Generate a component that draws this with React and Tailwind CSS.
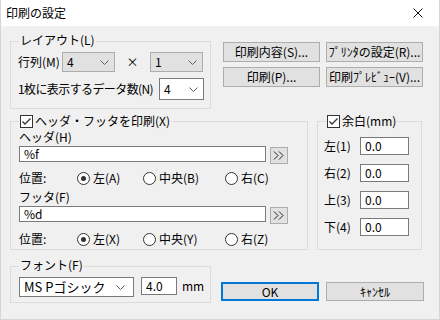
import React from 'react'

const Chevron = () => (
  <svg width="9" height="5" viewBox="0 0 9 5" className="shrink-0">
    <polyline points="0.5,0.5 4.5,4.5 8.5,0.5" fill="none" stroke="#606060" strokeWidth="1" />
  </svg>
)

const Check = () => (
  <span className="w-[13px] h-[13px] border border-[#333] bg-white flex items-center justify-center shrink-0">
    <svg width="11" height="11" viewBox="0 0 11 11">
      <polyline points="1.5,5.5 4,8 9.5,2.5" fill="none" stroke="#333" strokeWidth="1.3" />
    </svg>
  </span>
)

const Radio = ({ on, label, w }) => (
  <div className={`flex items-center gap-[3px] ${w}`}>
    <span className="w-[13px] h-[13px] rounded-full border border-[#333] bg-white flex items-center justify-center shrink-0">
      {on && <span className="w-[5px] h-[5px] rounded-full bg-[#333]" />}
    </span>
    <span>{label}</span>
  </div>
)

const Btn = ({ children, className = '' }) => (
  <div className={`h-[20px] w-[97px] bg-[#e1e1e1] border border-[#adadad] flex items-center justify-center whitespace-nowrap ${className}`}>
    {children}
  </div>
)

const Legend = ({ children, top = '-top-[10px]', left = 'left-[8px]' }) => (
  <div className={`absolute ${top} ${left} h-[16px] bg-[#f0f0f0] px-[1px] flex items-center gap-[2px] whitespace-nowrap`}>
    {children}
  </div>
)

const ArrowBtn = () => (
  <div className="w-[18px] h-[17px] mt-[1px] ml-[4px] bg-[#e1e1e1] border border-[#adadad] flex items-center justify-center">
    <svg width="12" height="9" viewBox="0 0 12 9">
      <polyline points="1,0.5 5,4.5 1,8.5" fill="none" stroke="#222" strokeWidth="1" />
      <polyline points="6,0.5 10,4.5 6,8.5" fill="none" stroke="#222" strokeWidth="1" />
    </svg>
  </div>
)

const Field = ({ value, className = '' }) => (
  <div className={`bg-white border border-[#7a7a7a] pl-[4px] flex items-center ${className}`}>{value}</div>
)

export default function App() {
  return (
    <div className='w-[440px] h-[320px] bg-[#f0f0f0] border-x border-b border-[#d6d6d6] flex flex-col text-[12px] leading-[16px] text-black font-["Noto_Sans_CJK_JP",sans-serif]'>
      {/* title */}
      <div className="h-[26px] bg-white flex items-center justify-between pl-[5px] pr-[16px]">
        <span>印刷の設定</span>
        <svg width="10" height="10" viewBox="0 0 10 10">
          <path d="M0.5 0.5 L9.5 9.5 M9.5 0.5 L0.5 9.5" stroke="#111" strokeWidth="1" />
        </svg>
      </div>

      {/* layout + buttons */}
      <div className="flex mt-[15px] ml-[9px]">
        <div className="relative w-[201px] h-[68px] border border-[#dcdcdc] pt-[10px] pl-[7px]">
          <Legend>レイアウト(L)</Legend>
          <div className="flex items-center h-[20px]">
            <span className="w-[44px] whitespace-nowrap">行列(M)</span>
            <div className="w-[53px] h-[20px] bg-[#e1e1e1] border border-[#adadad] flex items-center justify-between pl-[4px] pr-[5px]">
              <span>4</span>
              <Chevron />
            </div>
            <span className="w-[35px] text-center">×</span>
            <div className="w-[53px] h-[20px] bg-[#e1e1e1] border border-[#adadad] flex items-center justify-between pl-[4px] pr-[5px]">
              <span>1</span>
              <Chevron />
            </div>
          </div>
          <div className="flex items-center mt-[6px] h-[22px]">
            <span className="w-[141px] whitespace-nowrap tracking-[-0.6px]">1枚に表示するデータ数(N)</span>
            <div className="w-[45px] h-[22px] bg-white border border-[#7a7a7a] flex items-center justify-between pl-[4px] pr-[5px]">
              <span>4</span>
              <Chevron />
            </div>
          </div>
        </div>
        <div className="ml-[12px] mt-[1px] grid grid-cols-[97px_97px] gap-x-[6px] gap-y-[5px] self-start">
          <Btn>印刷内容(S)...</Btn>
          <Btn>ﾌﾟﾘﾝﾀの設定(R)...</Btn>
          <Btn>印刷(P)...</Btn>
          <Btn>印刷ﾌﾟﾚﾋﾞｭｰ(V)...</Btn>
        </div>
      </div>

      {/* header/footer + margin */}
      <div className="flex mt-[12px] ml-[9px]">
        <div className="relative w-[298px] h-[129px] border border-[#dcdcdc] pt-[8px] pl-[8px]">
          <Legend top="-top-[9px]" left="left-[8px]">
            <Check />
            <span>ヘッダ・フッタを印刷(X)</span>
          </Legend>
          <div className="h-[14px] leading-[14px]">ヘッダ(H)</div>
          <div className="flex mt-[2px]">
            <Field value="%f" className="w-[247px] h-[16px]" />
            <ArrowBtn />
          </div>
          <div className="flex items-center h-[16px] mt-[6px]">
            <span className="w-[58px]">位置:</span>
            <Radio on label="左(A)" w="w-[66px]" />
            <Radio label="中央(B)" w="w-[82px]" />
            <Radio label="右(C)" />
          </div>
          <div className="h-[14px] leading-[14px] mt-[4px]">フッタ(F)</div>
          <div className="flex mt-[2px]">
            <Field value="%d" className="w-[247px] h-[16px]" />
            <ArrowBtn />
          </div>
          <div className="flex items-center h-[16px] mt-[7px]">
            <span className="w-[58px]">位置:</span>
            <Radio on label="左(X)" w="w-[66px]" />
            <Radio label="中央(Y)" w="w-[82px]" />
            <Radio label="右(Z)" />
          </div>
        </div>

        <div className="relative ml-[9px] w-[105px] h-[129px] border border-[#dcdcdc] pt-[15px] pl-[6px] flex flex-col gap-[9px]">
          <Legend top="-top-[9px]" left="left-[8px]">
            <Check />
            <span>余白(mm)</span>
          </Legend>
          {['左(1)', '右(2)', '上(3)', '下(4)'].map((l) => (
            <div key={l} className="flex items-center h-[18px]">
              <span className="w-[36px]">{l}</span>
              <Field value="0.0" className="w-[49px] h-[18px]" />
            </div>
          ))}
        </div>
      </div>

      {/* font + ok/cancel */}
      <div className="flex items-start mt-[16px] ml-[9px]">
        <div className="relative w-[201px] h-[37px] border border-[#dcdcdc] pt-[10px] pl-[8px] flex items-start">
          <Legend>フォント(F)</Legend>
          <div className="w-[115px] h-[20px] bg-white border border-[#7a7a7a] flex items-center justify-between pl-[4px] pr-[8px]">
            <span className="text-[13px]">MS Pゴシック</span>
            <Chevron />
          </div>
          <Field value="4.0" className="ml-[7px] w-[36px] h-[18px]" />
          <span className="ml-[5px] h-[18px] flex items-center">mm</span>
        </div>
        <div className="flex mt-[16px] ml-[10px] gap-[7px]">
          <div className="w-[98px] h-[19px] bg-[#e1e1e1] border-2 border-[#0078d7] flex items-center justify-center">OK</div>
          <div className="w-[98px] h-[19px] bg-[#e1e1e1] border border-[#adadad] flex items-center justify-center">ｷｬﾝｾﾙ</div>
        </div>
      </div>
    </div>
  )
}
